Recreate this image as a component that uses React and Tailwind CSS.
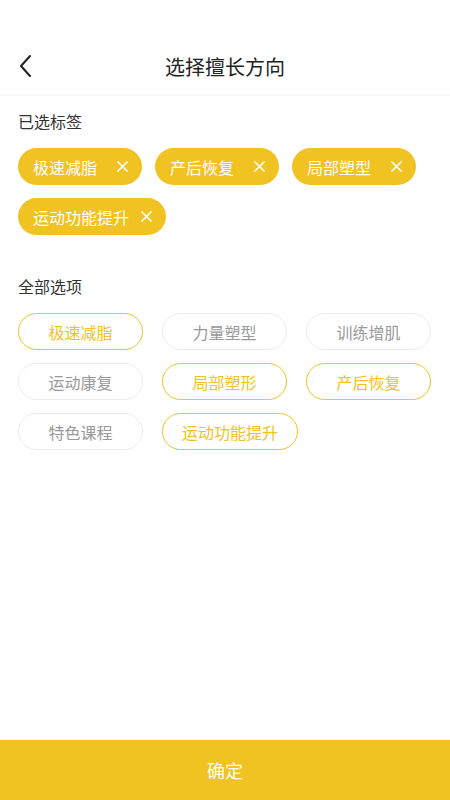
import React, { useState } from 'react';

const font = { fontFamily: '"Noto Sans CJK SC", "Noto Sans", sans-serif' };

const allOptions = ['极速减脂', '力量塑型', '训练增肌', '运动康复', '局部塑形', '产后恢复', '特色课程', '运动功能提升'];

export default function App() {
  const [selected, setSelected] = useState(['极速减脂', '产后恢复', '局部塑型', '运动功能提升']);
  const picked = ['极速减脂', '局部塑形', '产后恢复', '运动功能提升'];

  return (
    <div className="w-[450px] h-[800px] bg-white flex flex-col" style={font}>
      {/* Header */}
      <div className="h-[40px]" />
      <div className="relative h-[56px] flex items-center justify-center border-b-2 border-[#f7f7f7]">
        <button className="absolute left-[14px] top-[13px] w-[22px] h-[26px] flex items-center justify-center">
          <svg width="14" height="24" viewBox="0 0 14 24" fill="none">
            <path d="M12 2 L3 12 L12 22" stroke="#222" strokeWidth="2" strokeLinecap="round" strokeLinejoin="round" />
          </svg>
        </button>
        <h1 className="text-[20px] text-[#222] leading-none">选择擅长方向</h1>
      </div>

      <div className="flex-1 px-[18px]">
        {/* Selected */}
        <div className="pt-[13px] text-[16px] text-[#333] leading-[24px]">已选标签</div>
        <div className="mt-[15px] flex flex-wrap gap-x-[13px] gap-y-[13px]">
          {selected.map((s) => (
            <div key={s} className="h-[37px] rounded-full bg-[#f0c222] flex items-center pl-[15px] pr-[14px]">
              <span className="min-w-[72px] text-[16px] text-white leading-none">{s}</span>
              <button onClick={() => setSelected(selected.filter((x) => x !== s))} className="ml-[12px] w-[11px] h-[11px] flex items-center justify-center">
                <svg width="11" height="11" viewBox="0 0 11 11">
                  <path d="M1 1 L10 10 M10 1 L1 10" stroke="#fff" strokeWidth="1.7" strokeLinecap="round" />
                </svg>
              </button>
            </div>
          ))}
        </div>

        {/* All options */}
        <div className="mt-[39px] text-[16px] text-[#333] leading-[24px]">全部选项</div>
        <div className="mt-[15px] flex flex-wrap gap-x-[19px] gap-y-[13px]">
          {allOptions.map((o) => {
            const on = picked.includes(o);
            return (
              <div
                key={o}
                className={`h-[37px] min-w-[125px] px-[19px] rounded-full flex items-center justify-center text-[16px] leading-none border-[1.5px] ${
                  on ? 'border-[#f0c222] text-[#f0c222]' : 'border-[#ececec] text-[#999]'
                }`}
              >
                {o}
              </div>
            );
          })}
        </div>
      </div>

      {/* Bottom */}
      <button className="h-[60px] w-full bg-[#f0c222] text-white text-[18px]">确定</button>
    </div>
  );
}
